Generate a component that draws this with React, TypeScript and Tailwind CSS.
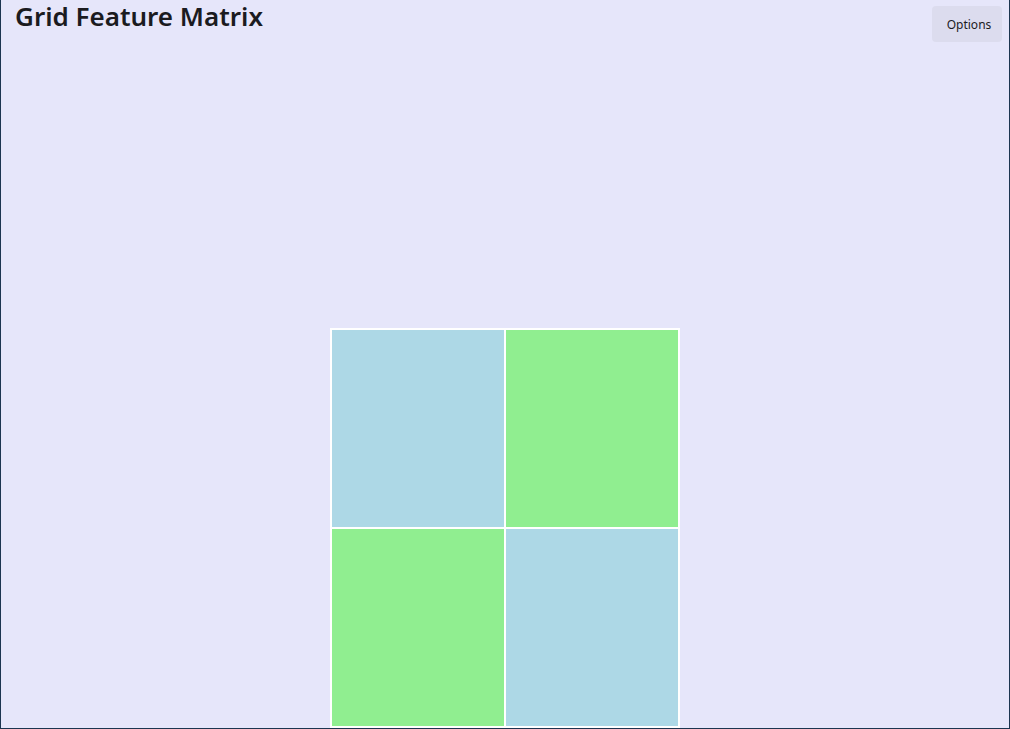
const cells = ['bg-[#add8e6]', 'bg-[#90ee90]', 'bg-[#90ee90]', 'bg-[#add8e6]'];

export default function App() {
  return (
    <div
      className="flex h-[729px] w-[1010px] flex-col overflow-hidden border-x border-b border-[#1c3550] bg-[#e6e6fa]"
      style={{ fontFamily: '"Noto Sans", "Open Sans", sans-serif' }}
    >
      {/* Header */}
      <div className="flex items-start justify-between pl-[14px] pr-[7px]">
        <h1 className="text-[26px] font-semibold leading-[32px] text-[#1b1b1f]">Grid Feature Matrix</h1>
        <button className="mt-[6px] h-[36px] w-[70px] rounded-[4px] bg-[#dcdcee] pl-[4px] pt-[2px] text-[12px] text-[#1b1b1f]">
          Options
        </button>
      </div>

      {/* Matrix */}
      <div className="flex flex-1 justify-center pt-[286px]">
        <div className="grid h-[400px] w-[350px] grid-cols-[172px_172px] grid-rows-[197px_197px] gap-[2px] bg-white p-[2px]">
          {cells.map((c, i) => (
            <div key={i} className={c} />
          ))}
        </div>
      </div>
    </div>
  );
}
